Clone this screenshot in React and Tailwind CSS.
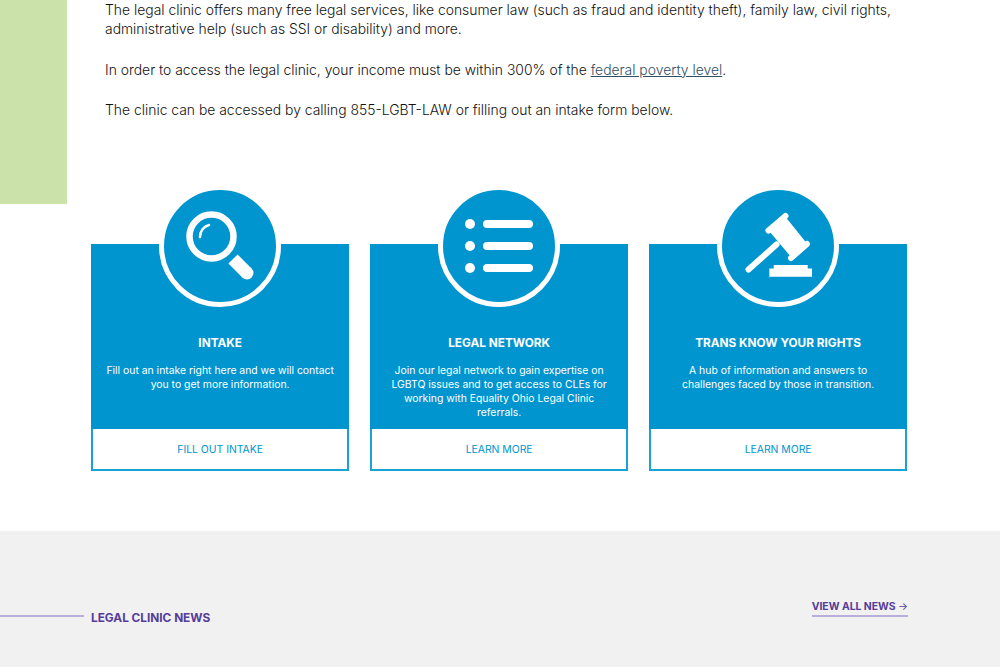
import React from "react";

const cards = [
  {
    title: "INTAKE",
    text: "Fill out an intake right here and we will contact you to get more information.",
    cta: "FILL OUT INTAKE",
    icon: "search",
  },
  {
    title: "LEGAL NETWORK",
    text: "Join our legal network to gain expertise on LGBTQ issues and to get access to CLEs for working with Equality Ohio Legal Clinic referrals.",
    cta: "LEARN MORE",
    icon: "list",
  },
  {
    title: "TRANS KNOW YOUR RIGHTS",
    text: "A hub of information and answers to challenges faced by those in transition.",
    cta: "LEARN MORE",
    icon: "gavel",
  },
];

const SearchIcon = () => (
  <svg viewBox="0 0 112 112" className="w-[112px] h-[112px]">
    <circle cx="47.500" cy="46.500" r="22" fill="none" stroke="white" strokeWidth="6.500" />
    <path d="M36 47a12 12 0 0 1 9-12" fill="none" stroke="white" strokeWidth="2.500" strokeLinecap="round" />
    <path d="M69 69l14 14" stroke="white" strokeWidth="13" />
    <circle cx="83" cy="83" r="6.500" fill="white" />
  </svg>
);

const ListIcon = () => (
  <svg viewBox="0 0 112 112" className="w-[112px] h-[112px]">
    <circle cx="27" cy="34" r="5" fill="white" />
    <circle cx="27" cy="56" r="5" fill="white" />
    <circle cx="27" cy="78" r="5" fill="white" />
    <rect x="40" y="30" width="50" height="8" rx="4" fill="white" />
    <rect x="40" y="52" width="50" height="8" rx="4" fill="white" />
    <rect x="40" y="74" width="50" height="8" rx="4" fill="white" />
  </svg>
);

const GavelIcon = () => (
  <svg viewBox="0 0 112 112" className="w-[112px] h-[112px]">
    <path d="M26.500 79.500l28-25" stroke="white" strokeWidth="6" strokeLinecap="round" />
    <path d="M47.500 41.500l16.500-14 20.500 25.500-15.500 14z" fill="white" />
    <path d="M46.500 40.500l17-14.500M69 68l16-14" stroke="white" strokeWidth="6" strokeLinecap="round" />
    <path d="M47.300 78.500h42.700v8.300h-42.700z" fill="white" />
    <path d="M51.700 75h34v4h-34z" fill="white" />
  </svg>
);

const icons = { search: SearchIcon, list: ListIcon, gavel: GavelIcon };

const Card = ({ card }) => {
  const Icon = icons[card.icon];
  return (
    <div className="w-[258.250px] flex flex-col">
      <div className="h-[185px] bg-[#0095cf] flex flex-col items-center">
        <div className="-mt-[59px] shrink-0 w-[122px] h-[122px] rounded-full bg-[#0095cf] border-[5px] border-white">
          <Icon />
        </div>
        <h3 className="mt-[28px] text-[11.800px] leading-[16px] font-bold text-white">{card.title}</h3>
        <p className="mt-[12.500px] px-[15px] text-center text-[10.400px] leading-[14px] text-white">{card.text}</p>
      </div>
      <a className="h-[42px] pt-[1px] flex items-center justify-center bg-white border-2 border-t-0 border-[#1aa2d6] text-[10.400px] text-[#0095cf]">
        {card.cta}
      </a>
    </div>
  );
};

export default function App() {
  return (
    <div className="h-[667px] overflow-hidden bg-white font-['Inter',sans-serif]">
      <div className="flex">
        <div className="w-[67px] h-[204px] bg-[#cbe3aa]" />
        <div className="pl-[38px] pt-[1px] w-[850px] text-[13.900px] leading-[19px] text-[#111] font-light">
          <p>
            The legal clinic offers many free legal services, like consumer law (such as fraud and identity theft), family law, civil rights, administrative help (such as SSI or disability) and more.
          </p>
          <p className="mt-[22px]">
            In order to access the legal clinic, your income must be within 300% of the{" "}
            <a className="underline text-[#2f4f66]">federal poverty level</a>.
          </p>
          <p className="mt-[21px]">The clinic can be accessed by calling 855-LGBT-LAW or filling out an intake form below.</p>
        </div>
      </div>
      <div className="mt-[40px] pl-[91px] flex gap-[20.750px]">
        {cards.map((c) => (
          <Card key={c.title} card={c} />
        ))}
      </div>
      <div className="mt-[60px] h-[136px] bg-[#f1f1f1] flex">
        <div className="w-[84px] h-[2px] mt-[84px] bg-[#b9aedb]" />
        <div className="ml-[7px] mt-[79px] text-[11.800px] leading-[16px] font-bold text-[#553c9a]">LEGAL CLINIC NEWS</div>
        <div className="ml-auto mr-[92px] mt-[68px] h-[18px] border-b-2 border-[#b9aedb] text-[10.400px] leading-[14px] pt-[1px] font-bold text-[#553c9a]">
          VIEW ALL NEWS <span className="font-normal">→</span>
        </div>
      </div>
    </div>
  );
}
